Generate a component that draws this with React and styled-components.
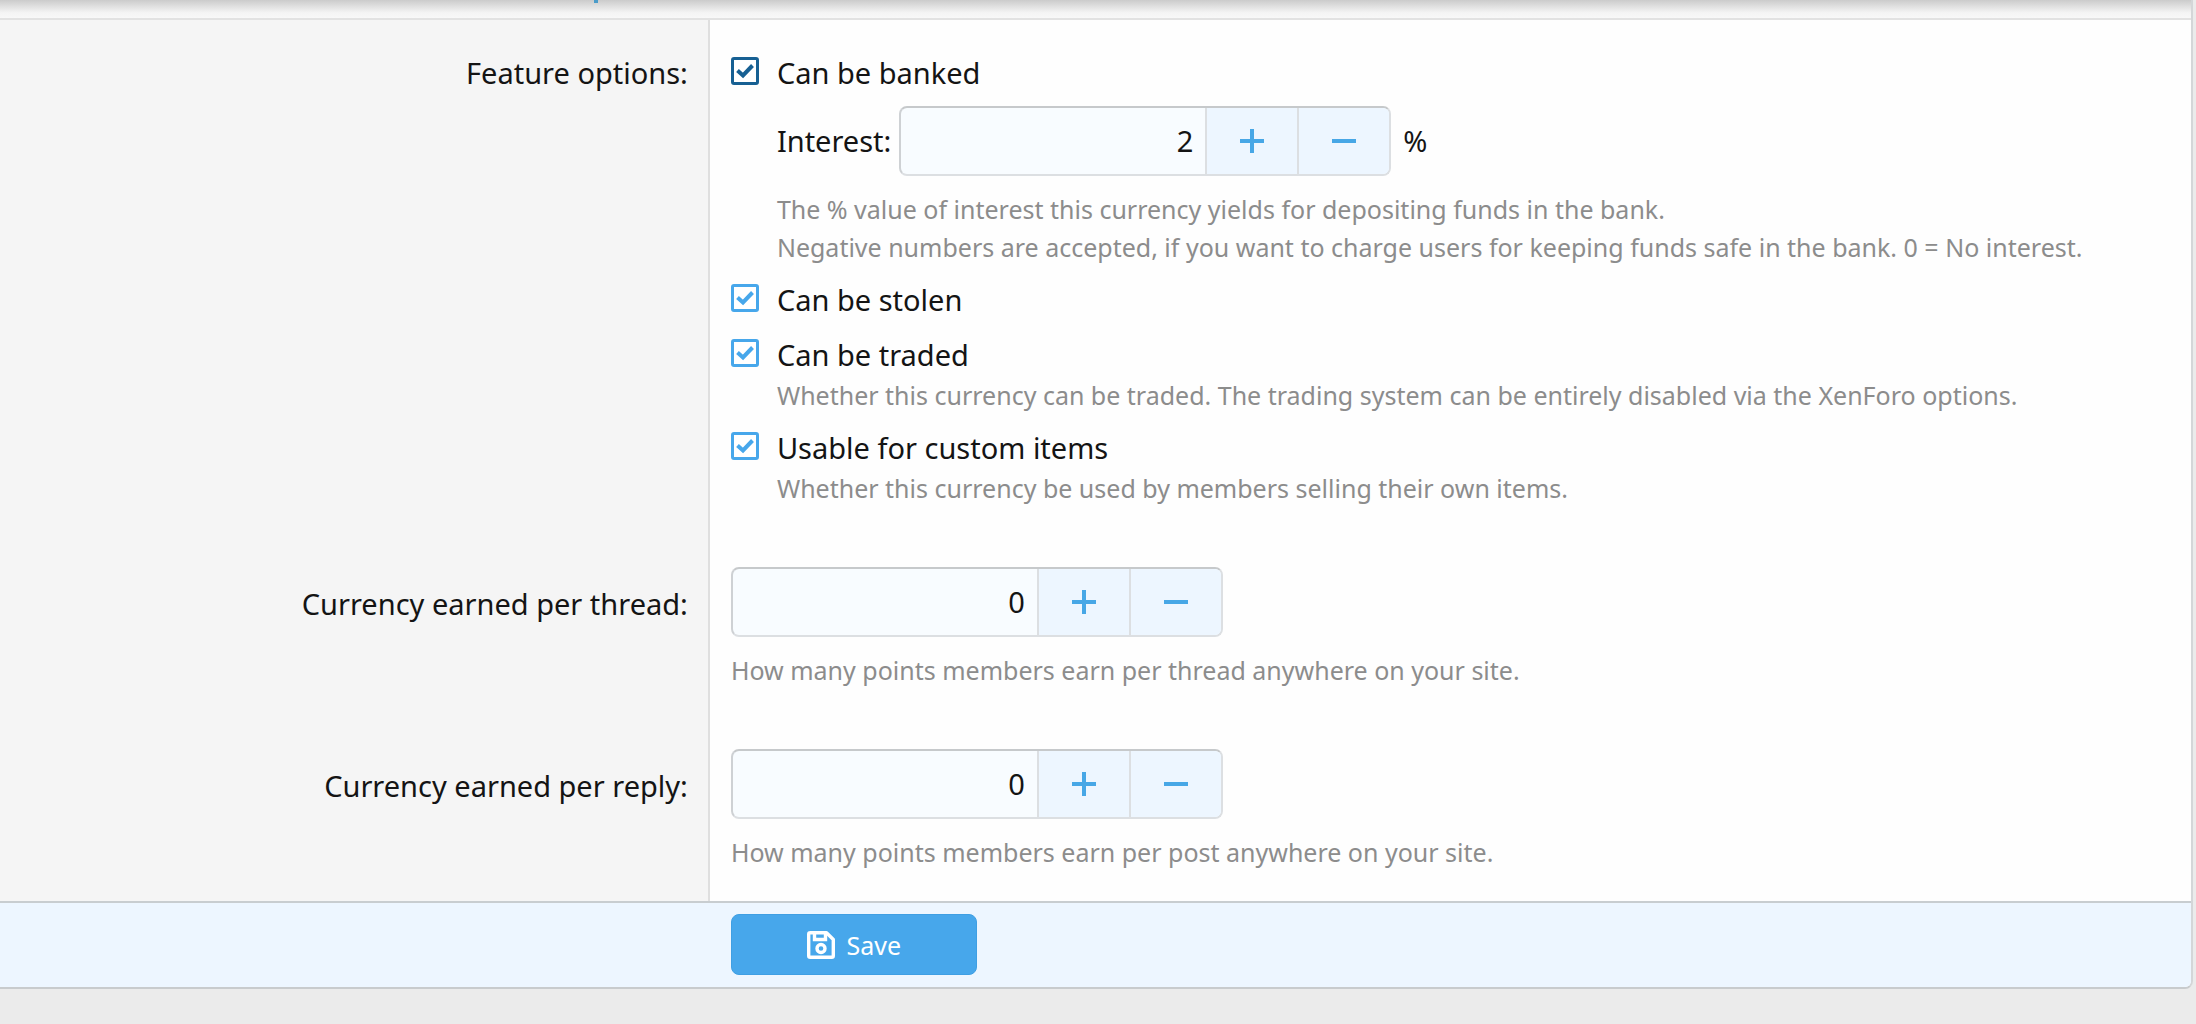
import { useState } from "react";
import styled, { createGlobalStyle } from "styled-components";

export default function App() {
  return (
    <>
      <GlobalStyle />
      <Form onSubmit={(e) => e.preventDefault()}>
        <TabBar>
          <TabMark />
        </TabBar>

        <Row>
          <Label as="div" id="feature-options">
            Feature options:
          </Label>
          <Field role="group" aria-labelledby="feature-options">
            <Choice id="banked" label="Can be banked" dark>
              <InterestRow>
                <label htmlFor="interest">Interest:</label>
                <NumberBox id="interest" initial={2} />
                <span>%</span>
              </InterestRow>
              <Hint>
                The % value of interest this currency yields for depositing
                funds in the bank.
                <br />
                Negative numbers are accepted, if you want to charge users for
                keeping funds safe in the bank. 0 = No interest.
              </Hint>
            </Choice>
            <Choice id="stolen" label="Can be stolen" />
            <Choice id="traded" label="Can be traded">
              <Hint>
                Whether this currency can be traded. The trading system can be
                entirely disabled via the XenForo options.
              </Hint>
            </Choice>
            <Choice id="custom" label="Usable for custom items">
              <Hint>
                Whether this currency be used by members selling their own
                items.
              </Hint>
            </Choice>
          </Field>
        </Row>

        <Row $input>
          <Label htmlFor="per-thread">Currency earned per thread:</Label>
          <Field>
            <NumberBox id="per-thread" initial={0} />
            <Hint $spaced>
              How many points members earn per thread anywhere on your site.
            </Hint>
          </Field>
        </Row>

        <Row $input>
          <Label htmlFor="per-reply">Currency earned per reply:</Label>
          <Field>
            <NumberBox id="per-reply" initial={0} />
            <Hint $spaced>
              How many points members earn per post anywhere on your site.
            </Hint>
          </Field>
        </Row>

        <Footer>
          <SaveButton type="submit">
            <SaveIcon />
            Save
          </SaveButton>
        </Footer>
      </Form>
    </>
  );
}

function Choice({ id, label, dark, children }) {
  const [checked, setChecked] = useState(true);

  return (
    <ChoiceItem>
      <Check $dark={dark}>
        <input
          id={id}
          type="checkbox"
          checked={checked}
          onChange={(e) => setChecked(e.target.checked)}
        />
        {checked && (
          <svg viewBox="0 0 28 28" aria-hidden="true">
            <path d="M6.5 13.5 12 18.5 21.5 8.5" />
          </svg>
        )}
      </Check>
      <ChoiceBody>
        <ChoiceLabel htmlFor={id}>{label}</ChoiceLabel>
        {children}
      </ChoiceBody>
    </ChoiceItem>
  );
}

function NumberBox({ id, initial }) {
  const [value, setValue] = useState(initial);

  return (
    <NumberGroup>
      <input
        id={id}
        type="text"
        inputMode="numeric"
        value={value}
        onChange={(e) => setValue(e.target.value)}
      />
      <button
        type="button"
        aria-label="Increase"
        onClick={() => setValue(Number(value) + 1)}
      >
        <svg viewBox="0 0 24 24" aria-hidden="true">
          <path d="M2 12H22M12 2V22" />
        </svg>
      </button>
      <button
        type="button"
        aria-label="Decrease"
        onClick={() => setValue(Number(value) - 1)}
      >
        <svg viewBox="0 0 24 24" aria-hidden="true">
          <path d="M2 12H22" />
        </svg>
      </button>
    </NumberGroup>
  );
}

function SaveIcon() {
  return (
    <svg width="28" height="28" viewBox="0 0 28 28" aria-hidden="true">
      <g fill="none" stroke="currentColor" strokeWidth="3.4">
        <path
          strokeLinejoin="round"
          d="M3 1.7H19.5L26.3 8.5V24.8Q26.3 26.3 24.8 26.3H3.2Q1.7 26.3 1.7 24.8V3.2Q1.7 1.7 3.2 1.7Z"
        />
        <path d="M7.5 2V8.5H18.5V2" />
        <circle cx="14" cy="17.5" r="4" />
      </g>
    </svg>
  );
}

const GlobalStyle = createGlobalStyle`
  * {
    box-sizing: border-box;
  }

  body {
    margin: 0;
    background-color: #ebebeb;
    color: #141414;
    font-family: "Noto Sans", "Open Sans", sans-serif;
    font-size: 29px;
    line-height: 42px;
  }
`;

const Form = styled.form`
  margin-right: 3px;
  background-color: #fefefe;
  border-right: 2px solid #d4d6d8;
  border-bottom: 2px solid #c8cbcd;
  border-radius: 0 0 8px 0;
  overflow: hidden;
`;

const TabBar = styled.div`
  height: 20px;
  padding-left: 594px;
  border-bottom: 2px solid #e2e2e2;
  background: linear-gradient(#cbcbcb, #f4f4f4 70%, #f8f8f8);
`;

const TabMark = styled.div`
  width: 4px;
  height: 3px;
  background-color: #4b9cc9;
`;

const Label = styled.label`
  display: block;
  background-color: #f5f5f5;
  border-right: 2px solid #dfdfdf;
  text-align: right;
`;

const Field = styled.div``;

const Row = styled.div`
  display: grid;
  grid-template-columns: 32.4% 1fr;

  ${Label} {
    padding: ${(props) => (props.$input ? "46px" : "32px")} 20px 0 20px;
  }

  ${Field} {
    padding: ${(props) => (props.$input ? "30px" : "32px")} 20px 30px 21px;
  }
`;

const ChoiceItem = styled.div`
  display: flex;
  gap: 18px;

  & + & {
    margin-top: 13px;
  }
`;

const Check = styled.span`
  display: grid;
  width: 28px;
  height: 28px;
  margin-top: 5px;
  color: ${(props) => (props.$dark ? "#176093" : "#47a7eb")};

  input,
  svg {
    grid-area: 1 / 1;
    width: 28px;
    height: 28px;
    margin: 0;
  }

  input {
    appearance: none;
    border: 3px solid;
    border-color: ${(props) => (props.$dark ? "#176093" : "#47a7eb")};
    border-radius: 3px;
    background-color: #ffffff;
  }

  svg {
    pointer-events: none;
    z-index: 1;
    fill: none;
    stroke: currentColor;
    stroke-width: 4;
  }
`;

const ChoiceBody = styled.div`
  flex: 1;
  min-width: 0;
`;

const ChoiceLabel = styled.label`
  display: block;
`;

const InterestRow = styled.div`
  display: flex;
  align-items: center;
  gap: 8px;
  margin: 12px 0 14px 0;

  span {
    padding-left: 4px;
  }
`;

const Hint = styled.div`
  margin-top: ${(props) => (props.$spaced ? "14px" : "0")};
  color: #8c8c8c;
  font-size: 25px;
  line-height: 38px;
`;

const NumberGroup = styled.div`
  display: flex;
  width: 492px;
  height: 70px;
  border: 2px solid #dcdfe2;
  border-top-color: #c6c9cb;
  border-left-color: #ced1d4;
  border-radius: 8px;
  background-color: #f8fcff;
  overflow: hidden;

  input {
    flex: 1;
    min-width: 0;
    padding: 0 12px;
    border: none;
    background: none;
    color: inherit;
    font: inherit;
    text-align: right;
  }

  button {
    display: flex;
    justify-content: center;
    align-items: center;
    width: 92px;
    padding: 0;
    border: none;
    border-left: 2px solid #dcdfe2;
    background-color: #edf6ff;
    color: #47a7e6;
    cursor: pointer;
  }

  svg {
    width: 24px;
    height: 24px;
    fill: none;
    stroke: currentColor;
    stroke-width: 4;
    stroke-linecap: square;
  }
`;

const Footer = styled.div`
  padding: 11px 0 12px calc(32.4% + 21px);
  border-top: 2px solid #c8cdd0;
  background-color: #edf6ff;
`;

const SaveButton = styled.button`
  display: flex;
  justify-content: center;
  align-items: center;
  gap: 12px;
  width: 246px;
  height: 61px;
  border: 1px solid #3f9fe3;
  border-radius: 8px;
  background-color: #47a7eb;
  color: #ffffff;
  font-family: inherit;
  font-size: 25px;
  cursor: pointer;
`;
